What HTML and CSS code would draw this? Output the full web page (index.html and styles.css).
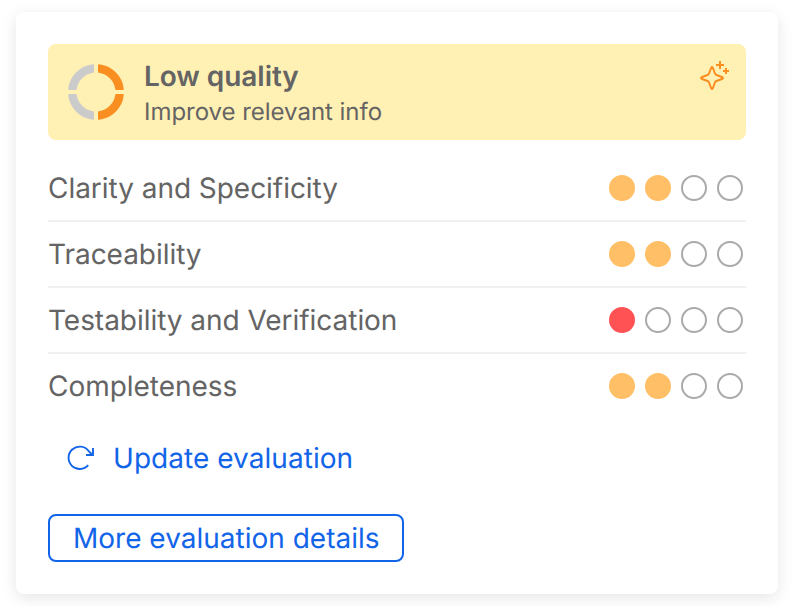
FILE: index.html
```html
<!DOCTYPE html>
<html lang="en">
<head>
<meta charset="utf-8">
<title>Quality evaluation</title>
<link rel="stylesheet" href="styles.css">
</head>
<body>
<main class="card">
  <header class="banner">
    <svg class="ring" viewBox="0 0 56 56" stroke-width="2" stroke-linejoin="round">
      <g fill="#fa8f21" stroke="#fa8f21">
        <path d="M31 1.200A27 27 0 0 1 54.800 25H48.300A20.500 20.500 0 0 0 31 7.700Z"/>
        <path d="M31 1.200A27 27 0 0 1 54.800 25H48.300A20.500 20.500 0 0 0 31 7.700Z" transform="rotate(90 28 28)"/>
      </g>
      <g fill="#cbcbcb" stroke="#cbcbcb">
        <path d="M31 1.200A27 27 0 0 1 54.800 25H48.300A20.500 20.500 0 0 0 31 7.700Z" transform="rotate(180 28 28)"/>
        <path d="M31 1.200A27 27 0 0 1 54.800 25H48.300A20.500 20.500 0 0 0 31 7.700Z" transform="rotate(270 28 28)"/>
      </g>
    </svg>
    <div class="summary">
      <h1 class="title">Low quality</h1>
      <p class="subtitle">Improve relevant info</p>
    </div>
    <svg class="sparkle" viewBox="0 0 32 32" fill="none" stroke="#fa8f21" stroke-width="2" stroke-linejoin="round">
      <path d="M13.300 8.500Q14 7.600 14.700 8.500L17 14.500Q17.400 15.600 18.500 16L24.500 18.300Q25.400 19 24.500 19.700L18.500 22Q17.400 22.400 17 23.500L14.700 29.500Q14 30.400 13.300 29.500L11 23.500Q10.600 22.400 9.500 22L3.500 19.700Q2.600 19 3.500 18.300L9.500 16Q10.600 15.600 11 14.500Z"/>
      <path d="M22 2v8M18 6h8M28 9v6M25 12h6"/>
    </svg>
  </header>
  <ul class="criteria">
    <li class="row"><span class="label">Clarity and Specificity</span><span class="dots"><i class="dot amber"></i><i class="dot amber"></i><i class="dot"></i><i class="dot"></i></span></li>
    <li class="row"><span class="label">Traceability</span><span class="dots"><i class="dot amber"></i><i class="dot amber"></i><i class="dot"></i><i class="dot"></i></span></li>
    <li class="row"><span class="label">Testability and Verification</span><span class="dots"><i class="dot red"></i><i class="dot"></i><i class="dot"></i><i class="dot"></i></span></li>
    <li class="row"><span class="label">Completeness</span><span class="dots"><i class="dot amber"></i><i class="dot amber"></i><i class="dot"></i><i class="dot"></i></span></li>
  </ul>
  <button class="update">
    <svg class="refresh" viewBox="0 0 28 28" fill="none" stroke="currentColor" stroke-width="1.900">
      <path d="M22.200 21.200A11.200 11.200 0 1 1 22.500 6.800L26 10.600M27 4V11H20"/>
    </svg>
    <span class="update-text">Update evaluation</span>
  </button>
  <button class="details"><span class="details-text">More evaluation details</span></button>
</main>
</body>
</html>
```
FILE: styles.css
```css
* { box-sizing: border-box; }
body { margin: 0; padding: 12px 16px; background: #fff; font-family: Inter, sans-serif; color: #646464; text-rendering: geometricPrecision; }
.card { width: 762px; height: 582px; padding: 32px; border-radius: 8px; background: #fff; box-shadow: 0 4px 16px rgba(0,0,0,.1); }
.banner { display: flex; align-items: center; height: 96px; padding: 0 16px 0 20px; border-radius: 8px; background: #fff0b3; }
.ring { width: 56px; height: 56px; margin-right: 20px; }
.summary { flex: 1; padding-top: 5px; }
.title { margin: 0; font-size: 28px; line-height: 35px; font-weight: 600; letter-spacing: -0.05px; }
.subtitle { margin: 0; font-size: 24px; line-height: 36px; letter-spacing: -0.03px; }
.sparkle { width: 32px; height: 32px; align-self: flex-start; margin-top: 15px; }
.criteria { list-style: none; margin: 16px 0 0; padding: 0; }
.row { display: flex; align-items: center; justify-content: space-between; height: 66px; padding-right: 3px; border-bottom: 2px solid #f0f0f0; font-size: 28px; letter-spacing: -0.04px; }
.row:last-child { border-bottom-color: transparent; }
.dots { display: flex; gap: 10px; }
.dot { width: 26px; height: 26px; border: 2px solid #aaa; border-radius: 50%; }
.amber { background: #ffbf66; border-color: #ffbf66; }
.red { background: #ff5254; border-color: #ff5254; }
button { display: flex; align-items: center; height: 48px; margin: 0; border: 0; background: none; color: #1264e8; font: 28px/36px Inter, sans-serif; text-rendering: inherit; white-space: nowrap; }
.update { margin-top: 14px; padding: 0 18px; }
.update-text { letter-spacing: 0.05px; }
.refresh { width: 28px; height: 28px; margin-right: 19px; }
.details { width: 356px; margin-top: 32px; padding: 0 23px; border: 2px solid #1264e8; border-radius: 8px; }
```
